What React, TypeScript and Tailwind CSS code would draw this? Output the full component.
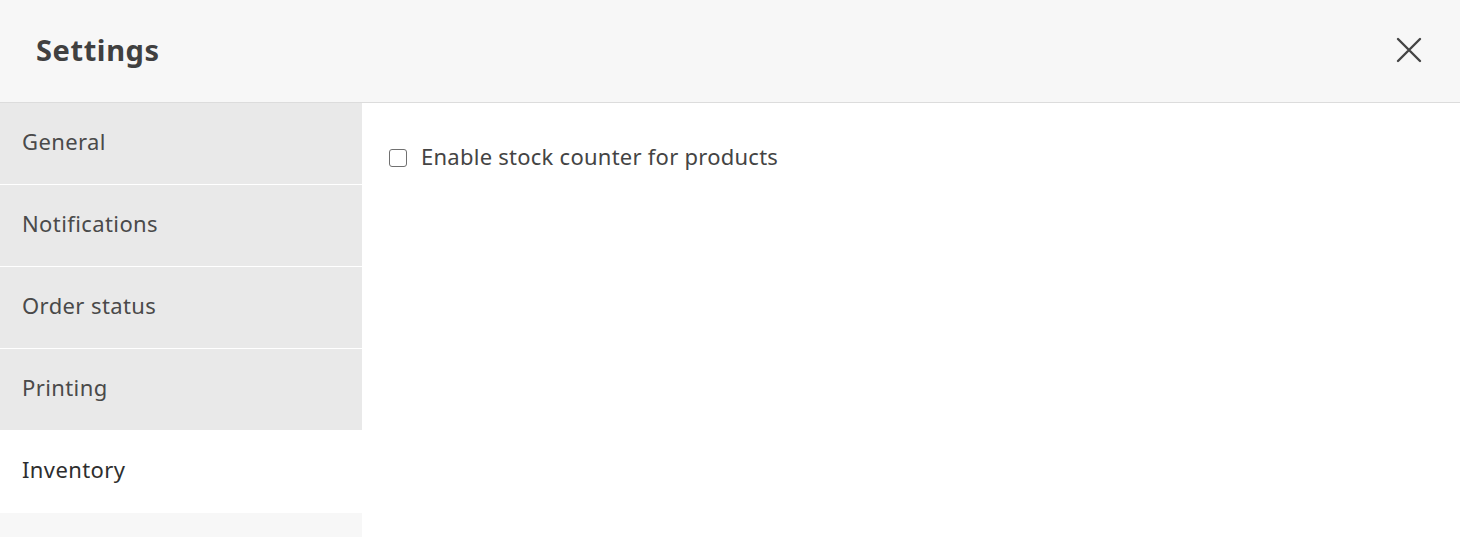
const tabs = ["General", "Notifications", "Order status", "Printing", "Inventory"];

export default function App() {
  const active = "Inventory";
  return (
    <div className="h-[537px] w-[1460px] overflow-hidden bg-white text-[#3d3d3d] font-['Noto_Sans',sans-serif]">
      <header className="flex h-[103px] items-center justify-between border-b border-[#dcdcdc] bg-[#f7f7f7] pb-[3px] pl-[36px] pr-[38px]">
        <h1 className="text-[29px] font-bold tracking-[0.6px] text-[#404040]">Settings</h1>
        <button className="text-[#444]">
          <svg width="26" height="26" viewBox="0 0 26 26" fill="none" stroke="currentColor" strokeWidth="2.4" strokeLinecap="round">
            <path d="M2 2L24 24M24 2L2 24" />
          </svg>
        </button>
      </header>
      <div className="flex">
        <nav className="flex w-[362px] flex-col gap-px">
          {tabs.map((t) => (
            <div
              key={t}
              className={`flex h-[81px] items-center pb-[4px] pl-[22px] text-[22px] tracking-[0.4px] ${
                t === active ? "bg-white text-[#2e2e2e]" : "bg-[#e9e9e9] text-[#4a4a4a]"
              }`}
            >
              {t}
            </div>
          ))}
          <div className="h-[81px] bg-[#f7f7f7]" />
        </nav>
        <main className="flex-1 pt-[37px]">
          <label className="ml-[27px] flex items-center gap-[14px] text-[22px] tracking-[0.25px] text-[#444]">
            <span className="mt-[2px] h-[18px] w-[18px] rounded-[3px] border-[1.5px] border-[#707070] bg-white" />
            Enable stock counter for products
          </label>
        </main>
      </div>
    </div>
  );
}
